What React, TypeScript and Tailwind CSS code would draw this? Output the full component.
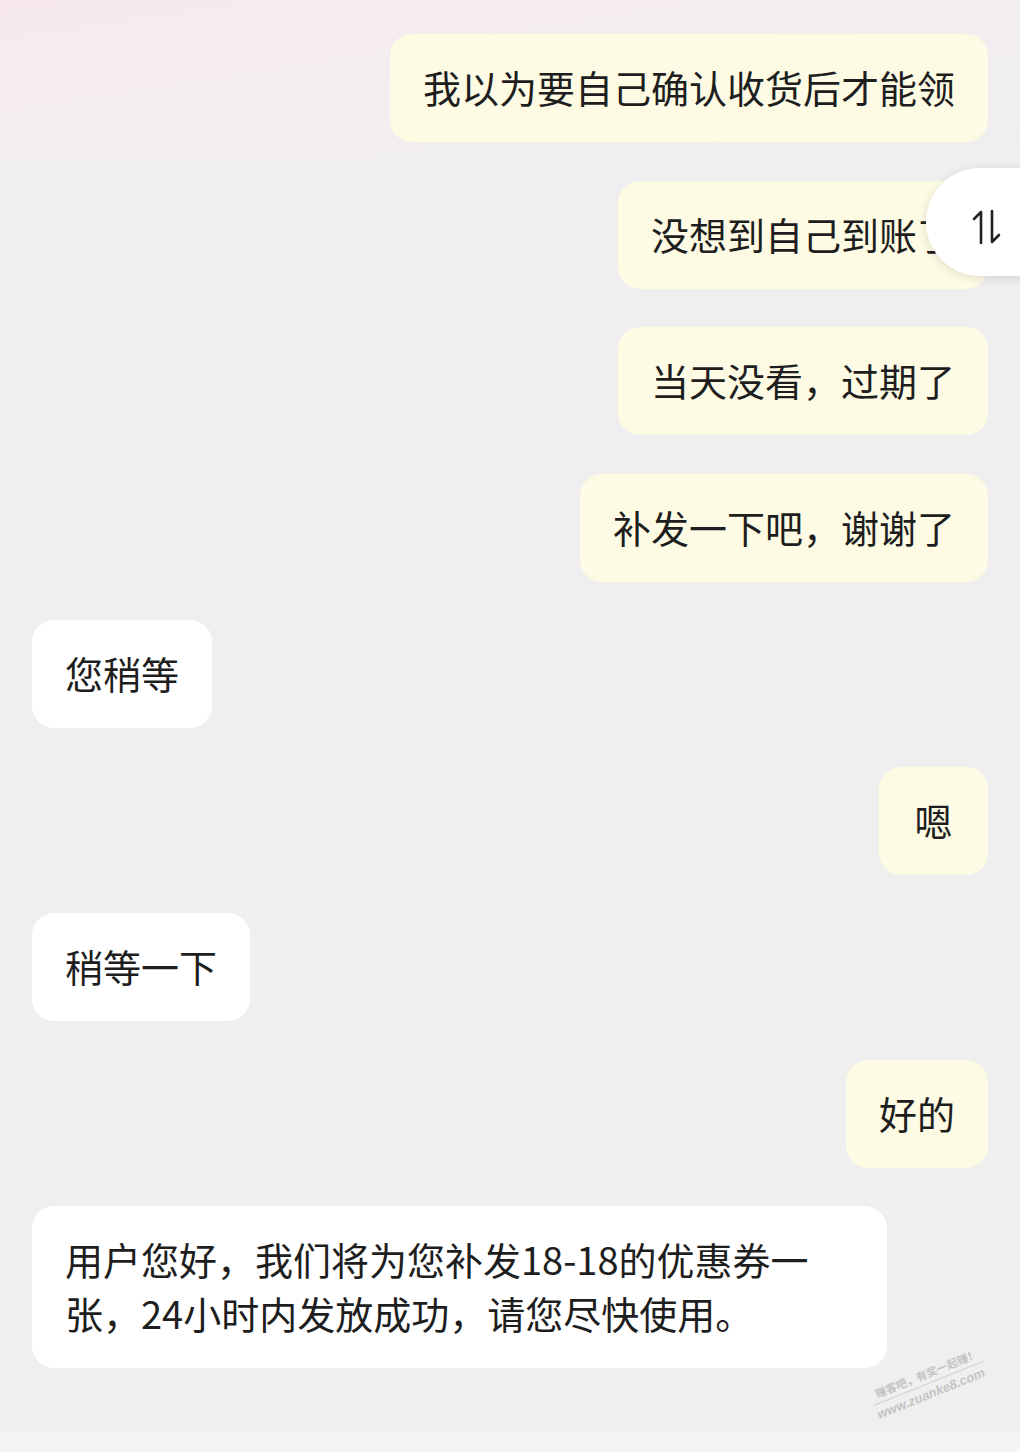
const mine = "bg-[#fdfbe4]";
const theirs = "bg-white";

type Msg = { side: "me" | "them"; text: string[]; wide?: boolean };

const messages: Msg[] = [
  { side: "me", text: ["我以为要自己确认收货后才能领"] },
  { side: "me", text: ["没想到自己到账了"] },
  { side: "me", text: ["当天没看，过期了"] },
  { side: "me", text: ["补发一下吧，谢谢了"] },
  { side: "them", text: ["您稍等"] },
  { side: "me", text: ["嗯"] },
  { side: "them", text: ["稍等一下"] },
  { side: "me", text: ["好的"] },
  {
    side: "them",
    text: ["用户您好，我们将为您补发18-18的优惠券一", "张，24小时内发放成功，请您尽快使用。"],
    wide: true,
  },
];

const Bubble = ({ msg }: { msg: Msg }) => (
  <div className={msg.side === "me" ? "flex justify-end" : "flex justify-start"}>
    <div
      className={`${msg.side === "me" ? mine : theirs} ${msg.wide ? "w-[855px]" : ""} min-w-[109px] text-center rounded-[22px] px-[33px] pt-[26px] pb-[28px] text-[38px] leading-[54px] text-[#1e1e1e] whitespace-nowrap`}
    >
      {msg.text.map((t, i) => (
        <div key={i} className={msg.wide ? "text-left" : ""}>
          {t}
        </div>
      ))}
    </div>
  </div>
);

const App = () => {
  return (
    <div
      className="relative w-[1020px] h-[1452px] overflow-hidden bg-[#efefef]"
      style={{ fontFamily: '"Noto Sans CJK SC", "Noto Sans", sans-serif' }}
    >
      <div className="absolute inset-x-0 top-0 h-[160px] bg-gradient-to-br from-[#f7e9ee] via-[#f3eef0] to-[#efefef]" />

      <div className="relative flex flex-col gap-[38.5px] px-[32px] pt-[34px]">
        {messages.map((m, i) => (
          <Bubble key={i} msg={m} />
        ))}
      </div>

      {/* floating sort button */}
      <div className="absolute left-[926px] top-[168px] w-[130px] h-[108px] rounded-l-[54px] bg-white shadow-[0_2px_10px_rgba(0,0,0,0.12)] flex items-center pl-[45px] pt-[10px]">
        <svg width="32" height="36" viewBox="0 0 32 36" fill="none" stroke="#222" strokeWidth="2.6" strokeLinecap="round" strokeLinejoin="round">
          <path d="M10 34 V3 L3 10" />
          <path d="M21 2 V33 L28 26" />
        </svg>
      </div>

      {/* watermark */}
      <div className="absolute left-[874px] top-[1390px] w-[124px] -rotate-[22deg] origin-left text-[#c4c4c4] leading-none">
        <div className="text-[11px] font-bold pl-[6px] mb-[4px] whitespace-nowrap">赚客吧，有奖一起赚！</div>
        <div className="h-px w-[118px] bg-[#d0d0d0] mb-[3px]" />
        <div className="text-[13px] font-bold italic whitespace-nowrap" style={{ fontFamily: '"Liberation Sans", sans-serif' }}>
          www.zuanke8.com
        </div>
      </div>

      <div className="absolute inset-x-0 bottom-0 h-[20px] bg-[#f5f5f5]" />
    </div>
  );
};

export default App;
